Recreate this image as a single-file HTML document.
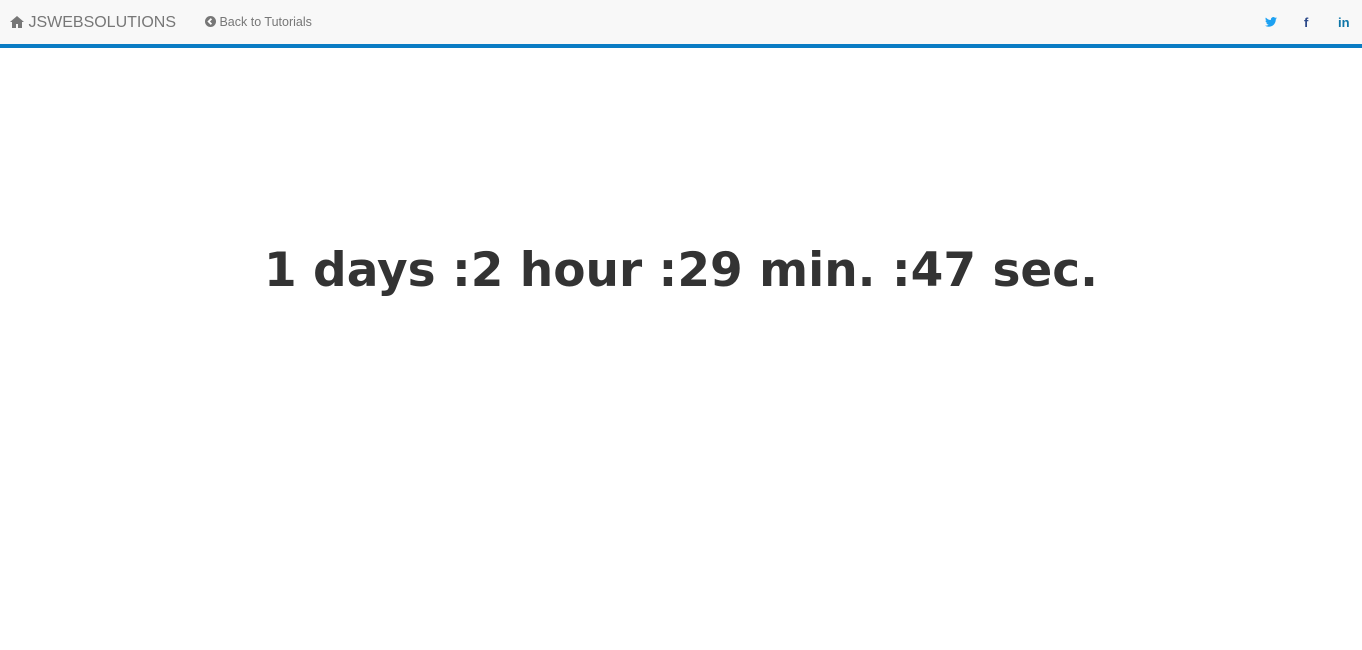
<!DOCTYPE html>
<html><head><style>
body{margin:0;background:#fff;font-family:"Liberation Sans",sans-serif;}
.nav{height:44px;background:#f8f8f8;border-bottom:4px solid #0a7cc4;position:relative;}
.brand{position:absolute;left:10px;top:14px;font-size:16px;color:#777;}
.back{position:absolute;left:205px;top:15px;font-size:12.5px;color:#777;}
.soc{position:absolute;top:15px;font-size:13px;font-weight:bold;}
h1{position:absolute;left:0;right:0;top:241px;margin:0;text-align:center;font-family:"DejaVu Sans",Verdana,sans-serif;font-weight:bold;font-size:47px;color:#333;line-height:60px;}
</style></head><body>
<div class="nav">
<div class="brand"><svg width="14" height="12" viewBox="0 0 14 12" style="vertical-align:-1px"><path d="M7 0L0 6h2v6h4V8h2v4h4V6h2z" fill="#777"/></svg> JSWEBSOLUTIONS</div>
<div class="back"><svg width="11" height="11" viewBox="0 0 12 12" style="vertical-align:-1px"><circle cx="6" cy="6" r="6" fill="#777"/><path d="M7 3L4 6l3 3" stroke="#fff" stroke-width="2" fill="none"/></svg> Back to Tutorials</div>
<div class="soc" style="left:1265px;color:#1da1f2">
<svg width="12" height="10" viewBox="0 0 24 20"><path d="M24 2.4a10 10 0 01-2.8.8A5 5 0 0023.3.5a10 10 0 01-3.1 1.2A4.9 4.9 0 0011.8 6 14 14 0 011.7.9a4.9 4.9 0 001.5 6.6A4.9 4.9 0 011 6.9a4.9 4.9 0 003.9 4.8 4.9 4.9 0 01-2.2.1 4.9 4.9 0 004.6 3.4A9.9 9.9 0 010 17.3 14 14 0 007.5 19.5c9 0 14-7.5 14-14v-.6A10 10 0 0024 2.4z" fill="#1da1f2"/></svg></div>
<div class="soc" style="left:1304px;color:#2d4a8a">f</div>
<div class="soc" style="left:1338px;color:#0e76a8">in</div>
</div>
<h1>1 days :2 hour :29 min. :47 sec.</h1>
</body></html>
